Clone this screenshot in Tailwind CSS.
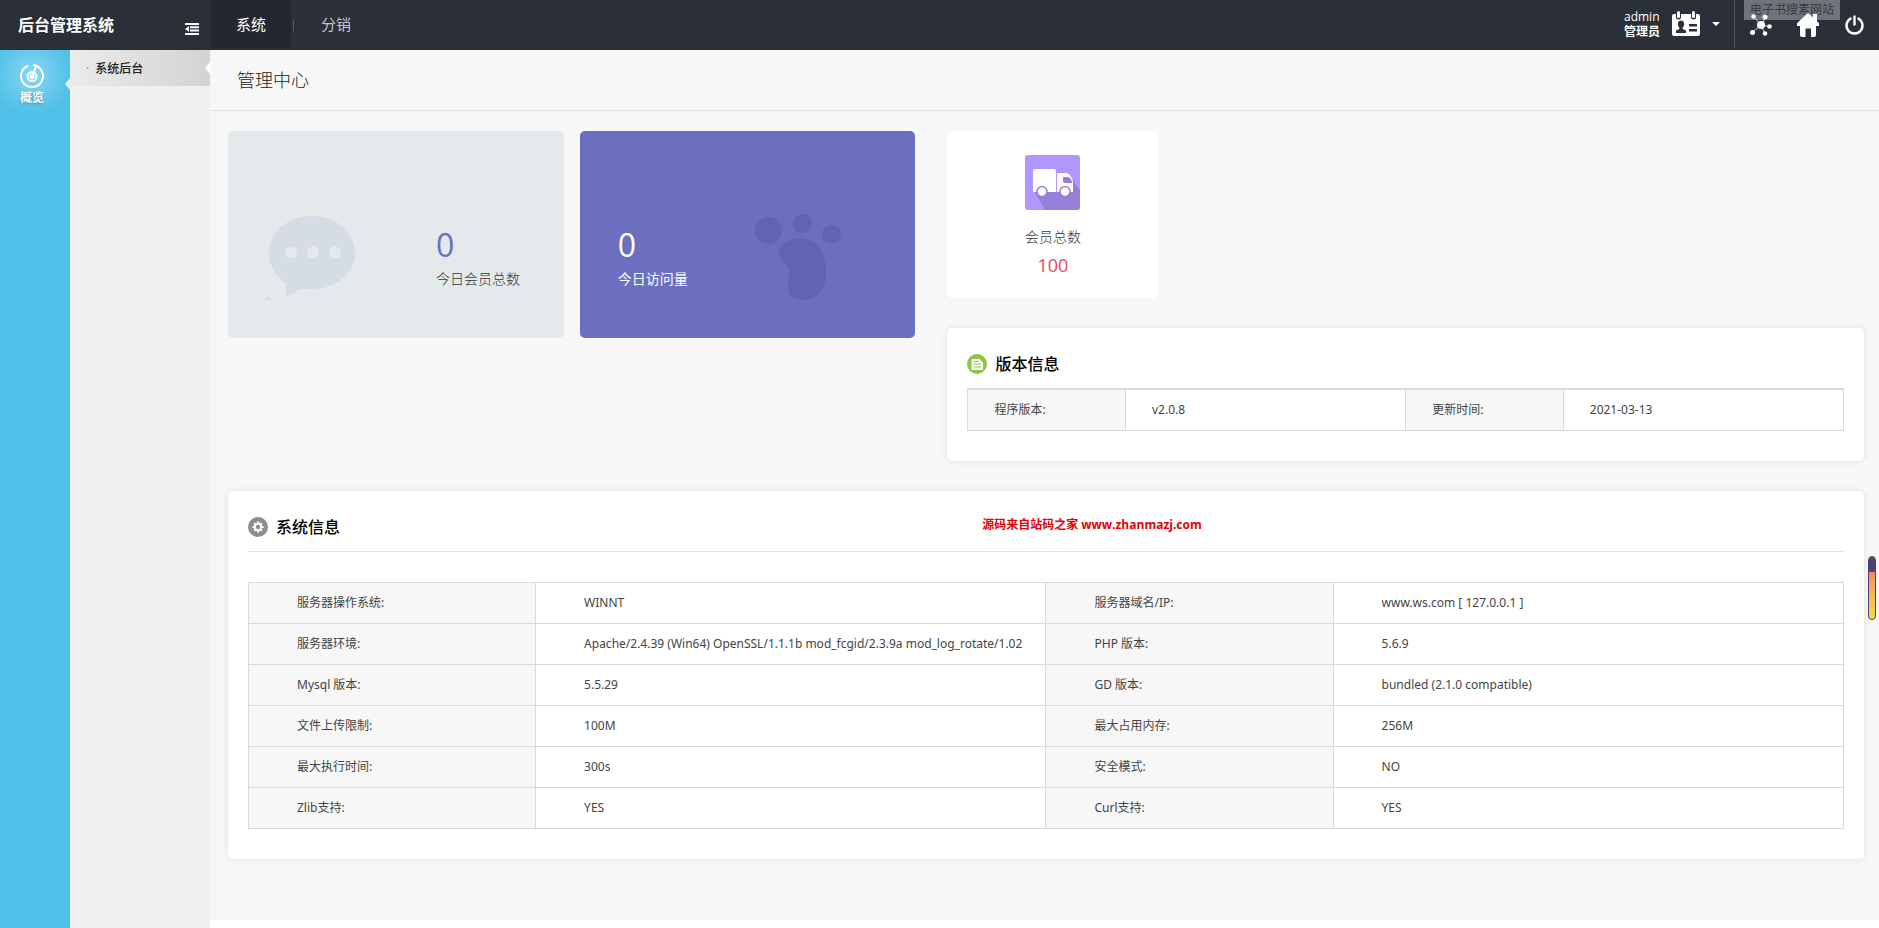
<!DOCTYPE html>
<html lang="zh-CN">
<head>
<meta charset="utf-8">
<meta name="viewport" content="width=device-width, initial-scale=1">
<title>后台管理系统</title>
<script src="https://cdn.jsdelivr.net/npm/@tailwindcss/browser@4"></script>
</head>
<body class="flex min-h-screen flex-col bg-white font-['Open_Sans','Noto_Sans_CJK_SC',sans-serif] text-xs text-[#444]">
<header class="flex h-[50px] shrink-0 bg-[#2a2f38] text-white">
  <div class="flex w-[211px] shrink-0 items-center justify-between pr-3 pl-[18px]">
    <h1 class="text-base font-bold">后台管理系统</h1>
    <button type="button" aria-label="收起菜单" class="mt-2">
      <svg class="h-3 w-[14px]" viewBox="0 0 14 12" fill="currentColor"><path d="M0 0h14v2H0zM5 3.3h9v2H5zM5 6.6h9v2H5zM0 10h14v2H0zM0 6l4-3v6z"/></svg>
    </button>
  </div>
  <nav class="flex items-center text-[15px]">
    <a href="#" class="flex h-12 w-20 items-center justify-center self-start bg-[#232830]">系统</a>
    <span class="ml-[2px] h-3 w-px bg-[#555a62]"></span>
    <a href="#" class="flex h-12 w-[84px] items-center justify-center self-start text-[#c4c6ca]">分销</a>
  </nav>
  <div class="relative ml-auto flex">
    <div class="flex h-12 items-center border-r border-[#50545c] pr-[14px]">
      <div class="text-xs leading-[15px]"><div>admin</div><div class="font-bold">管理员</div></div>
      <svg class="ml-3 h-[26px] w-7" viewBox="0 0 28 26" fill="#fff"><path d="M2 3h2v3a2.500 2.500 0 0 0 5 0V3h10v3a2.500 2.500 0 0 0 5 0V3h2a2 2 0 0 1 2 2v18a2 2 0 0 1-2 2H2a2 2 0 0 1-2-2V5a2 2 0 0 1 2-2z"/><rect x="5" y="0" width="3" height="7" rx="1.5"/><rect x="20" y="0" width="3" height="7" rx="1.5"/><path fill="#2a2f38" d="M9 9.500c2 0 3.200 1.500 3.200 3.600 0 1.500-.7 2.900-1.600 3.600v1.300l3.400 1.500v2.500H4v-2.500L7.400 18v-1.300c-.9-.7-1.600-2.100-1.600-3.600C5.800 11 7 9.500 9 9.500zM17 13h8v2.400h-8zM17 18h8v2.400h-8z"/></svg>
      <svg class="ml-3 h-1 w-2" viewBox="0 0 8 4" fill="#fff"><path d="M0 0h8L4 4z"/></svg>
    </div>
    <div class="absolute top-0 right-[39px] flex h-5 w-24 items-center justify-center bg-[#70737a] whitespace-nowrap text-[#373b43]">电子书搜素网站</div>
    <div class="relative flex h-[50px] items-center gap-[25px] pr-[14px] pl-[15px]">
      <a href="#" aria-label="站点地图"><svg class="h-[22px] w-[22px]" viewBox="0 0 22 22" fill="#fff" stroke="#fff"><path d="M11 11 4 3M11 11l4.500-7M11 11l8.500 1.500M11 11l4 8.500M11 11l-8 7" stroke-width=".8"/><g stroke="none"><circle cx="11" cy="11" r="4"/><circle cx="3.500" cy="2.500" r="2.200"/><circle cx="15" cy="3" r="2.500"/><circle cx="19.500" cy="12.500" r="2.300"/><circle cx="15" cy="19.500" r="2.300"/><circle cx="2.500" cy="18.500" r="2.500"/></g></svg></a>
      <a href="#" aria-label="首页"><svg class="h-6 w-[22px]" viewBox="0 0 22 24" fill="#fff"><path d="M11 0l5 4.600V1h4v7.300l2 2V13h-3v9a2 2 0 0 1-2 2h-3v-8.500H8.500V24H5a2 2 0 0 1-2-2v-9H0v-2.700z"/></svg></a>
      <a href="#" aria-label="退出"><svg class="h-5 w-[21px]" viewBox="0 0 20 20" fill="none" stroke="#fff" stroke-width="2.400" stroke-linecap="round"><path d="M6 3.600a8 8 0 1 0 8 0M10 1.500v8"/></svg></a>
    </div>
  </div>
</header>

<div class="flex grow">
  <nav class="relative w-[70px] shrink-0 bg-[#4fc0e8] text-white">
    <a href="#" class="flex flex-col items-center bg-[radial-gradient(circle_at_32px_25px,#8ad6f2,#4fc0e8_40px)] pt-[14px] pr-[6px] pb-3 font-bold">
      <svg class="h-6 w-6" viewBox="0 0 24 24" fill="none" stroke="#fff" stroke-width="2"><path d="M13 1.100a11 11 0 1 1-5 .7M17 2.200A11 11 0 0 1 20 4.500"/><circle cx="12" cy="12.500" r="4.500"/><circle cx="12" cy="12.500" r="1.500" fill="#fff"/><path d="M12 12 16.500 1.500"/></svg>
      <span class="leading-5 text-shadow-md">概览</span>
    </a>
    <svg class="absolute top-7 right-0 h-3 w-[5px]" viewBox="0 0 5 12" fill="#efefef"><path d="M5 0v12L0 6z"/></svg>
  </nav>
  <nav class="w-[140px] shrink-0 bg-[#f0f0f0]">
    <a href="#" class="relative flex h-9 items-center gap-[6px] bg-linear-to-r from-[#ebebeb] to-[#d3d3d3] pt-[2px] pl-4 font-medium text-[#222]">
      <span class="text-[#888]">·</span>系统后台
      <svg class="absolute top-3 right-0 h-3 w-[5px]" viewBox="0 0 5 12" fill="#fff"><path d="M5 0v12L0 6z"/></svg>
    </a>
  </nav>
  <main class="mb-2 min-w-0 grow bg-[#f7f7f7]">
    <h2 class="flex h-[61px] items-center border-b border-[#e2e2e2] pl-[27px] text-lg font-light text-[#222]">管理中心</h2>
    <div class="pt-5 pr-[15px] pb-[61px] pl-[18px]">
      <div class="grid grid-cols-[42fr_56fr] gap-8">
        <div class="grid grid-cols-2 items-start gap-4">
          <section class="flex h-[207px] items-start rounded-[5px] bg-[#e4e9eb] pt-[84px] pl-[38px]">
            <svg class="h-[86px] w-[90px]" viewBox="0 0 90 86"><path fill="#d5dce3" d="M46 1c24 0 43 16 43 36.500S70 74 46 74c-4 0-9-.3-12 0L20 82V68C9 61 3 50 3 37.500 3 17 22 1 46 1z"/><g fill="#e4e9eb"><circle cx="25" cy="37.500" r="6"/><circle cx="47" cy="37.500" r="6"/><circle cx="69" cy="37.500" r="6"/></g><ellipse cx="2.500" cy="83.500" rx="2.500" ry="1.500" fill="#d5dce3"/></svg>
            <div class="pt-[7px] pl-20"><p class="text-[32px] leading-[46px] text-[#6c6ebf]">0</p><p class="text-sm leading-[22px] font-light text-[#333]">今日会员总数</p></div>
          </section>
          <section class="flex h-[207px] items-start rounded-[5px] bg-[#6c6ebf] pt-[83px] pl-[38px] text-white">
            <div class="w-[137px] pt-2"><p class="text-[32px] leading-[46px]">0</p><p class="text-sm leading-[22px]">今日访问量</p></div>
            <svg class="h-[87px] w-[86px]" viewBox="0 0 86 87" fill="#6163b3"><circle cx="13.500" cy="16.500" r="13.500"/><circle cx="47.500" cy="9.500" r="9.500"/><circle cx="76.500" cy="20.500" r="9.500"/><path d="M45 24.500c18 0 26 14 26 33S62 86 47 86c-9 0-14-5-14-13 0-6 2-10 1-16-1-9-10-10-10-18 0-9 10-14.500 21-14.500z"/></svg>
          </section>
        </div>
        <div>
          <section class="flex h-[167px] w-[211px] flex-col items-center rounded-[5px] bg-white pt-6">
            <svg class="h-[55px] w-[55px]" viewBox="0 0 55 55"><rect width="55" height="55" rx="3" fill="#b197fc"/><path fill="#957fdb" d="M10 37 20 55h32a3 3 0 0 0 3-3V35L45 22v15z"/><path fill="#fff" d="M10 14h19a2 2 0 0 1 2 2v21H8V16a2 2 0 0 1 2-2zM32 18h9c3 0 7 5 7 10v9H32z"/><path fill="#957fdb" d="M38 22h4c3 0 5 3 5 6h-7a2 2 0 0 1-2-2z"/><g fill="#fff" stroke="#957fdb" stroke-width="1.500"><circle cx="17" cy="36.500" r="5"/><circle cx="40" cy="36.500" r="5"/></g></svg>
            <p class="mt-[15px] text-sm leading-6 font-light text-[#333]">会员总数</p>
            <p class="mt-1 text-lg leading-6 text-[#ec4758]">100</p>
          </section>
          <section class="mt-[30px] rounded-[5px] bg-white px-5 pt-6 pb-[30px] shadow-[0_0_6px_#0000001a]">
            <h3 class="flex h-6 items-center gap-2 text-base font-medium text-black">
              <svg class="h-5 w-5" viewBox="0 0 20 20"><circle cx="10" cy="10" r="10" fill="#8cc63f"/><path fill="#fff" d="M5.500 5h7L16 8.500V15a1 1 0 0 1-1 1H5.500a1 1 0 0 1-1-1V6a1 1 0 0 1 1-1z"/><path d="M6.500 7.500h5M6.500 10h7.500M6.500 13h7.500" stroke="#8cc63f" stroke-width="1.200"/></svg>版本信息</h3>
            <table class="mt-3 w-full table-fixed border-collapse text-left font-['Noto_Sans','Noto_Sans_CJK_SC',sans-serif]">
              <tr class="h-[41px] border border-t-2 border-[#dadada]">
                <th scope="row" class="w-[18%] border border-[#dadada] bg-[#f7f7f7] pl-[26px] font-normal">程序版本:</th><td class="w-[32%] border border-[#dadada] pl-[26px]">v2.0.8</td>
                <th scope="row" class="w-[18%] border border-[#dadada] bg-[#f7f7f7] pl-[26px] font-normal">更新时间:</th><td class="w-[32%] border border-[#dadada] pl-[26px]">2021-03-13</td>
              </tr>
            </table>
          </section>
        </div>
      </div>
      <section class="mt-[30px] rounded-[5px] bg-white px-5 pt-6 pb-[30px] shadow-[0_0_6px_#0000001a]">
        <div class="grid grid-cols-[46fr_54fr] items-center border-b border-[#dfdfdf] pb-3">
          <h3 class="flex h-6 items-center gap-2 text-base font-medium text-black">
            <svg class="h-5 w-5" viewBox="0 0 20 20"><circle cx="10" cy="10" r="10" fill="#8e8e8e"/><path d="M10 4.500v11M4.500 10h11M6.200 6.200l7.600 7.600M13.800 6.200l-7.600 7.600" stroke="#fff" stroke-width="2.200"/><circle cx="10" cy="10" r="3.200" fill="#8e8e8e" stroke="#fff" stroke-width="2"/></svg>系统信息</h3>
          <p class="pb-1 font-bold text-[#e60000]">源码来自站码之家 www.zhanmazj.com</p>
        </div>
        <table class="mt-[30px] w-full table-fixed border-collapse text-left font-['Noto_Sans','Noto_Sans_CJK_SC',sans-serif] whitespace-nowrap [&_td]:border [&_td]:border-[#dadada] [&_td]:pl-12 [&_th]:border [&_th]:border-[#dadada] [&_th]:bg-[#f7f7f7] [&_th]:pl-12 [&_th]:font-normal [&_tr]:h-[41px]">
          <colgroup><col class="w-[18%]"><col class="w-[32%]"><col class="w-[18%]"><col class="w-[32%]"></colgroup>
          <tr><th scope="row">服务器操作系统:</th><td>WINNT</td><th scope="row">服务器域名/IP:</th><td>www.ws.com [ 127.0.0.1 ]</td></tr>
          <tr><th scope="row">服务器环境:</th><td>Apache/2.4.39 (Win64) OpenSSL/1.1.1b mod_fcgid/2.3.9a mod_log_rotate/1.02</td><th scope="row">PHP 版本:</th><td>5.6.9</td></tr>
          <tr><th scope="row">Mysql 版本:</th><td>5.5.29</td><th scope="row">GD 版本:</th><td>bundled (2.1.0 compatible)</td></tr>
          <tr><th scope="row">文件上传限制:</th><td>100M</td><th scope="row">最大占用内存:</th><td>256M</td></tr>
          <tr><th scope="row">最大执行时间:</th><td>300s</td><th scope="row">安全模式:</th><td>NO</td></tr>
          <tr><th scope="row">Zlib支持:</th><td>YES</td><th scope="row">Curl支持:</th><td>YES</td></tr>
        </table>
      </section>
    </div>
  </main>
</div>
<!-- Floating level gauge pinned to the window edge -->
<div class="fixed top-[556px] right-[3px] h-16 w-2 overflow-hidden rounded-full border border-[#4a4570] bg-linear-to-b from-[#ff8560] from-25% to-[#e8e337]"><div class="h-[15px] bg-[#4a4570]"></div></div>
</body>
</html>
